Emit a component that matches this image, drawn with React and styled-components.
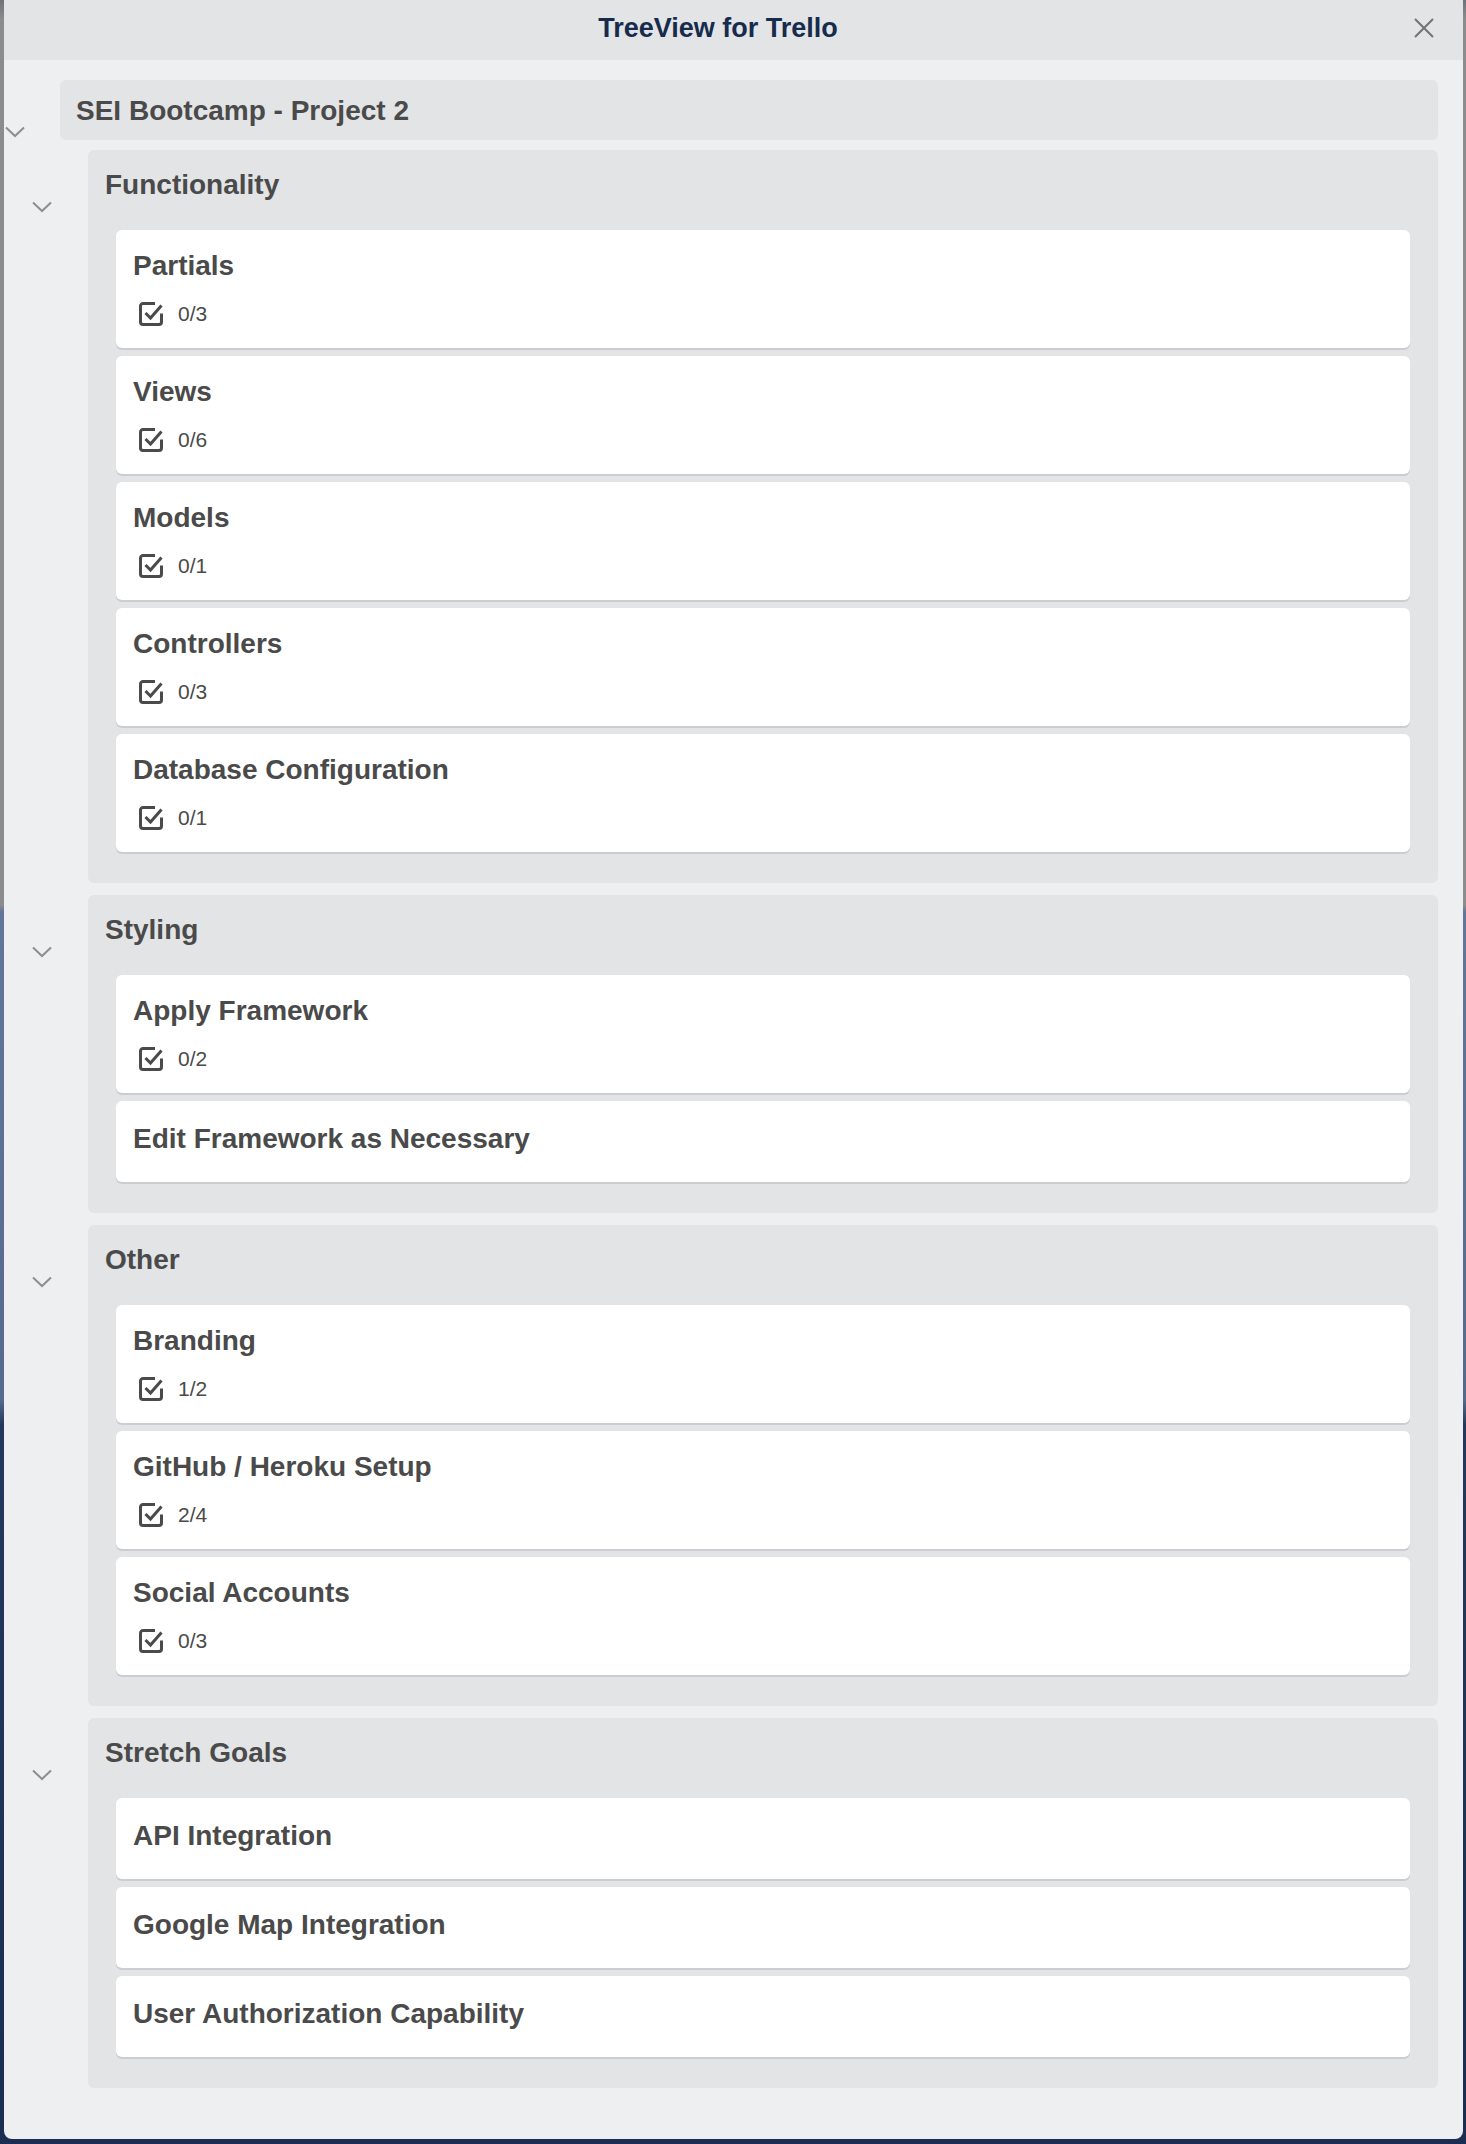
import React from "react";
import styled, { createGlobalStyle } from "styled-components";

const GlobalStyle = createGlobalStyle`
  html, body {
    margin: 0;
    padding: 0;
  }
  body {
    min-height: 2144px;
    font-family: "Liberation Sans", Arial, Helvetica, sans-serif;
    background: linear-gradient(
      to bottom,
      #6d737b 0px,
      #8c8c8c 20px,
      #8c8c8c 905px,
      #62769a 912px,
      #556a8e 1400px,
      #24385f 1425px,
      #1b2d50 100%
    );
  }
  #root {
    padding: 0 3px 6px 4px;
  }
`;

const lists = [
  {
    name: "Functionality",
    cards: [
      { name: "Partials", checks: "0/3" },
      { name: "Views", checks: "0/6" },
      { name: "Models", checks: "0/1" },
      { name: "Controllers", checks: "0/3" },
      { name: "Database Configuration", checks: "0/1" },
    ],
  },
  {
    name: "Styling",
    cards: [
      { name: "Apply Framework", checks: "0/2" },
      { name: "Edit Framework as Necessary" },
    ],
  },
  {
    name: "Other",
    cards: [
      { name: "Branding", checks: "1/2" },
      { name: "GitHub / Heroku Setup", checks: "2/4" },
      { name: "Social Accounts", checks: "0/3" },
    ],
  },
  {
    name: "Stretch Goals",
    cards: [
      { name: "API Integration" },
      { name: "Google Map Integration" },
      { name: "User Authorization Capability" },
    ],
  },
];

const Panel = styled.div`
  background: #edeff1;
  border-radius: 0 0 8px 8px;
  overflow: hidden;
`;

const Header = styled.div`
  position: relative;
  height: 60px;
  background: #e2e4e6;
  display: flex;
  align-items: center;
`;

const HeaderTitle = styled.h1`
  flex: 1;
  margin: 0 0 3px;
  padding-right: 31px;
  text-align: center;
  font-size: 27px;
  font-weight: 700;
  color: #172b4d;
`;

const CloseButton = styled.button`
  position: absolute;
  top: 17px;
  right: 28px;
  width: 22px;
  height: 22px;
  padding: 0;
  border: none;
  background: transparent;
  display: flex;
  align-items: center;
  justify-content: center;
  cursor: pointer;
`;

const Tree = styled.div`
  padding: 20px 25px 51px 0;
`;

const Node = styled.div`
  display: flex;
  margin-left: ${(props) => props.indent * 28}px;
  margin-top: ${(props) => props.gap || 0}px;
`;

const Toggle = styled.div`
  width: 56px;
  flex-shrink: 0;
  padding-top: ${(props) => props.offset}px;
  padding-left: ${(props) => props.inset || 0}px;
  box-sizing: border-box;
`;

const BoardBox = styled.div`
  flex: 1;
  height: 60px;
  box-sizing: border-box;
  padding: 15px 16px 0;
  background: #e2e4e6;
  border-radius: 6px;
  font-size: 28px;
  line-height: 32px;
  font-weight: 700;
  color: #4a4a4a;
`;

const ListBox = styled.div`
  flex: 1;
  background: #e2e4e6;
  border-radius: 6px;
  padding-bottom: 31px;
`;

const ListTitle = styled.div`
  height: 80px;
  box-sizing: border-box;
  padding: 19px 17px 0;
  font-size: 28px;
  line-height: 32px;
  font-weight: 700;
  color: #4a4a4a;
`;

const CardStack = styled.div`
  display: flex;
  flex-direction: column;
  gap: 8px;
  padding: 0 28px;
`;

const Card = styled.div`
  background: #fff;
  border-radius: 6px;
  box-shadow: 0 2px 0 #cbcdd0;
  padding: ${(props) => (props.hasBadges ? "20px 17px 22px" : "22px 17px 27px")};
`;

const CardTitle = styled.div`
  font-size: 28px;
  line-height: 32px;
  font-weight: 700;
  color: #4a4a4a;
`;

const Badges = styled.div`
  display: flex;
  align-items: center;
  height: 24px;
  margin-top: 20px;
`;

const Badge = styled.span`
  display: inline-flex;
  align-items: center;
  font-size: 21px;
  color: #4a4a4a;

  svg {
    margin: 0 15px 0 6px;
  }
`;

const Chevron = () => (
  <svg width="20" height="12" viewBox="0 0 20 12">
    <polyline
      points="1,1.5 10,10 19,1.5"
      fill="none"
      stroke="#8e8e8e"
      strokeWidth="2"
    />
  </svg>
);

const CheckIcon = () => (
  <svg width="24" height="24" viewBox="0 0 24 24">
    <path
      d="M16 1.5H4A2.5 2.5 0 0 0 1.5 4V20A2.5 2.5 0 0 0 4 22.5H20A2.5 2.5 0 0 0 22.5 20V11.5"
      fill="none"
      stroke="#4a4a4a"
      strokeWidth="3"
    />
    <path
      d="M6.5 11L11.5 16L22.5 3.5"
      fill="none"
      stroke="#4a4a4a"
      strokeWidth="3"
    />
  </svg>
);

const CloseIcon = () => (
  <svg width="20" height="20" viewBox="0 0 20 20">
    <path d="M1 1L19 19M19 1L1 19" stroke="#737373" strokeWidth="2" />
  </svg>
);

const App = () => {
  return (
    <>
      <GlobalStyle />
      <Panel>
        <Header>
          <HeaderTitle>TreeView for Trello</HeaderTitle>
          <CloseButton aria-label="Close">
            <CloseIcon />
          </CloseButton>
        </Header>
        <Tree>
          <Node indent={0}>
            <Toggle offset={44} inset={1}>
              <Chevron />
            </Toggle>
            <BoardBox>SEI Bootcamp - Project 2</BoardBox>
          </Node>
          {lists.map((list, i) => (
            <Node key={list.name} indent={1} gap={i === 0 ? 8 : 12}>
              <Toggle offset={49}>
                <Chevron />
              </Toggle>
              <ListBox>
                <ListTitle>{list.name}</ListTitle>
                <CardStack>
                  {list.cards.map((card) => (
                    <Card key={card.name} hasBadges={!!card.checks}>
                      <CardTitle>{card.name}</CardTitle>
                      {card.checks && (
                        <Badges>
                          <Badge>
                            <CheckIcon />
                            {card.checks}
                          </Badge>
                        </Badges>
                      )}
                    </Card>
                  ))}
                </CardStack>
              </ListBox>
            </Node>
          ))}
        </Tree>
      </Panel>
    </>
  );
};

export default App;
